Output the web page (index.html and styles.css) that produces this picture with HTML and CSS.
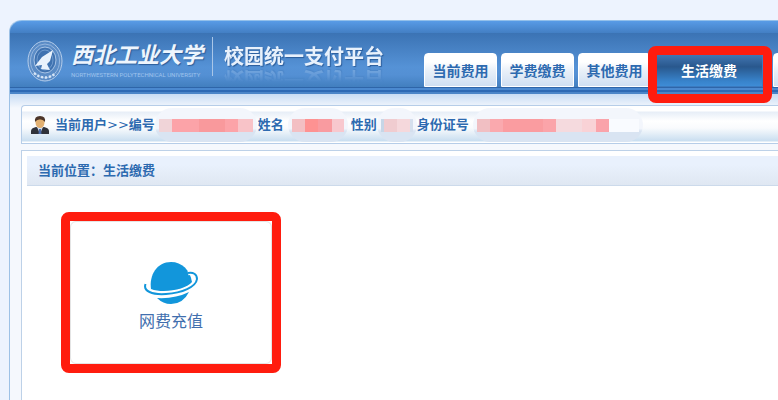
FILE: index.html
```html
<!DOCTYPE html>
<html lang="zh-CN">
<head>
  <meta charset="UTF-8" />
  <meta name="viewport" content="width=device-width, initial-scale=1.0" />
  <title>校园统一支付平台</title>
  <link rel="stylesheet" href="styles.css">
</head>
<body>
  <div class="wrapper">
    <header class="header">
      <svg class="badge" viewBox="0 0 36 42" aria-hidden="true">
        <ellipse cx="18" cy="21" rx="17" ry="20" fill="#5b8cc6" stroke="#b4cdeb" />
        <ellipse cx="18" cy="21" rx="14.5" ry="17" fill="none" stroke="#a4c2e5" stroke-width=".8" />
        <ellipse cx="18" cy="20" rx="11" ry="13" fill="#3f72b0" stroke="#a9c5e7" stroke-width="1" />
        <ellipse cx="18" cy="20" rx="8" ry="10" fill="none" stroke="#7ca6d7" stroke-width=".8" />
        <path d="M26 10 L15 17 L8 26 L15 25 L14 29 L23 30 L20 24 L23 21 Z" fill="#e9f2fc" />
        <path d="M7 33 Q18 42 29 33" fill="none" stroke="#d7e6f7" stroke-width="2.4" stroke-dasharray="2.2 1.8" />
      </svg>
      <div class="school">
        <div class="school-name">西北工业大学</div>
        <div class="school-en">NORTHWESTERN POLYTECHNICAL UNIVERSITY</div>
      </div>
      <h1>校园统一支付平台</h1>
      <nav class="tabs">
        <a href="#">当前费用</a>
        <a href="#">学费缴费</a>
        <a href="#">其他费用</a>
        <a href="#" class="active marked">生活缴费</a>
        <a href="#" aria-label="更多"></a>
      </nav>
    </header>

    <main>
      <div class="user-bar">
        <svg class="user-icon" viewBox="0 0 18 18" aria-hidden="true">
          <path d="M0 18 V15 Q0 12 5 11 L9 12 L13 11 Q18 12 18 15 V18 Z" fill="#30323a" />
          <path d="M6 11 L9 18 L12 11 Z" fill="#d5e2f4" />
          <path d="M8 13 H10 L10.5 18 H7.5 Z" fill="#4c6ca8" />
          <ellipse cx="9" cy="6.5" rx="4.5" ry="5.5" fill="#e3b172" />
          <path d="M4 6 Q3 0 9 0 Q15 0 14 6 Q12 3 9 3.500 Q6 3 4 6 Z" fill="#4b3429" />
        </svg>
        <span class="field">当前用户<span class="arrows">&gt;&gt;</span>编号</span>
        <span class="mask mask-id"></span>
        <span class="field">姓名</span>
        <span class="mask mask-name"></span>
        <span class="field">性别</span>
        <span class="mask mask-sex"></span>
        <span class="field">身份证号</span>
        <span class="mask mask-card"></span>
      </div>

      <section class="panel">
        <h2>当前位置：生活缴费</h2>
        <a href="#" class="service marked">
          <svg class="planet" viewBox="0 0 54 42" aria-hidden="true">
            <path d="M7 27 C5 13 13 0 27 0 C38 0 46 8 48 20 C43 27 20 32 7 27 Z" fill="#1296db" />
            <path d="M13 36 Q31 37 45 30 Q39 42 27 42 Q19 42 13 36 Z" fill="#1296db" />
            <path d="M1.500 22 C-1 29 8 33 22 32 C38 31 52 25 53 17 C53 12 49 10 44 11" fill="none" stroke="#fff" stroke-width="4.500" />
            <path d="M1.500 22 C-1 29 8 33 22 32 C38 31 52 25 53 17 C53 12 49 10 44 11" fill="none" stroke="#1296db" stroke-width="2" />
          </svg>
          <span>网费充值</span>
        </a>
      </section>
    </main>
  </div>
</body>
</html>
```

FILE: styles.css
```css
* {
  box-sizing: border-box;
}
body {
  margin: 0;
  padding: 20px 0 0 9px;
  min-height: 100vh;
  display: flex;
  background: #edf3fe;
  color: #2d6ab0;
  font-family: "Liberation Sans", "Noto Sans CJK SC", sans-serif;
  font-size: 13px;
}
a {
  color: inherit;
  text-decoration: none;
}
.wrapper {
  display: flex;
  flex: 1;
  flex-direction: column;
  min-width: 0;
  border-left: 1px solid #9dc1e6;
  border-top-left-radius: 12px;
  background: #f5f8fd;
  overflow-x: clip;
}

/* header */
.header {
  display: flex;
  height: 74px;
  padding-left: 17px;
  border-top: 1px solid #93c0ea;
  border-top-left-radius: 12px;
  background:
    linear-gradient(#2e65a9 0 1px, #4b89d0 1px 3px, #2d69b4 3px 5px, #4b85c8 5px) bottom / 100% 7px no-repeat,
    linear-gradient(#589be6, #437fc4) top / 100% 12px no-repeat,
    linear-gradient(#3b73b4 12px, #5592d6 46px, #5490d4 54px, #407dbd 67px);
}
.badge {
  flex: none;
  width: 36px;
  height: 42px;
  margin-top: 19px;
}
.school {
  flex: none;
  width: 150px;
  margin-top: 16px;
  padding: 4px 0 0 8px;
  height: 39px;
  border-right: 1px solid #a9c6e8;
  color: #eef5fd;
  white-space: nowrap;
}
.school-name {
  font-size: 22px;
  line-height: 30px;
  font-style: italic;
  font-weight: bold;
  text-shadow: 1px 1px 1px #2b5d9b;
}
.school-en {
  font-family: Roboto, sans-serif;
  font-size: 6px;
  line-height: 8px;
  color: #9fc3ec;
}
h1 {
  flex: none;
  margin: 21px 0 0 11px;
  width: 200px;
  height: 30px;
  font-size: 20px;
  line-height: 30px;
  white-space: nowrap;
  color: #e8f1fc;
  text-shadow: 1px 1px 1px #2b5d9b;
  -webkit-box-reflect: below -8px linear-gradient(transparent 40%, rgba(0, 0, 0, .3));
}
.tabs {
  display: flex;
  flex: 1;
  min-width: 0;
  gap: 4px;
  height: 34px;
  margin-top: 32px;
}
.tabs a {
  flex: none;
  width: 73px;
  border: 1px solid #fff;
  border-radius: 4px 4px 0 0;
  background: linear-gradient(#fff 25%, #eaf1f9 50%, #cfdff2);
  font-size: 14px;
  font-weight: bold;
  line-height: 34px;
  text-align: center;
}
.tabs .active {
  width: 108px;
  margin-right: 6px;
  border-color: #3b7abf;
  background: linear-gradient(#4478b4, #29588d 40%, #3883cb 85%, #3e8cd6);
  color: #fff;
}

/* red highlight frame */
.marked {
  position: relative;
}
.marked::after {
  content: "";
  position: absolute;
  inset: -10px;
  border: 9px solid #ff1c0e;
  border-radius: 8px;
}
.tabs .marked::after {
  inset: -8px -10px -17px -8px;
}

main {
  display: flex;
  flex: 1;
  flex-direction: column;
  padding: 11px 0 0 11px;
  background: linear-gradient(#c8dcf4, #f5f8fd 14px);
}

/* current user */
.user-bar {
  display: flex;
  align-items: center;
  height: 39px;
  padding-left: 9px;
  border: 1px solid #b6cde8;
  border-right: 0;
  border-top-left-radius: 4px;
  background: linear-gradient(#fff 5px, #e7eef7 6px, #fff 15px, #f9fbfd 22px, #c9def0 35px, #fff 36px);
  white-space: nowrap;
}
.user-icon {
  width: 18px;
  height: 18px;
  margin-right: 6px;
}
.field {
  line-height: 20px;
  font-weight: bold;
}
.arrows {
  font-family: "DejaVu Sans", sans-serif;
  font-size: 13px;
  font-weight: normal;
}
.mask {
  height: 34px;
  border-radius: 17px;
  background: linear-gradient(#f3f6fc 60%, #d9e4f2 68%);
}
.mask::before {
  content: "";
  display: block;
  height: 13px;
  margin: 11px 4px 0;
}
.mask-id {
  width: 102px;
  margin-right: 1px;
}
.mask-id::before {
  background: linear-gradient(90deg, #f0d4d8 13px, #fca3a8 13px 40px, #f9999c 40px 66px, #fca3a8 66px 79px, #f8c3c8 79px);
}
.mask-name {
  width: 60px;
  margin: 0 3px 0 4px;
}
.mask-name::before {
  background: linear-gradient(90deg, #f3bfc3 13px, #fe9292 13px 26px, #f99ba0 26px 40px, #f8c8ce 40px);
}
.mask-sex {
  width: 40px;
}
.mask-sex::before {
  background: linear-gradient(90deg, #c6d6e7 3px, #f0ccd0 3px 16px, #f5d8dc 16px 29px, #d5dfed 29px);
}
.mask-card {
  width: 170px;
  margin-left: 4px;
}
.mask-card::before {
  background: linear-gradient(90deg, #f1bfc3 13px, #faa9ae 13px 26px, #fa9ca0 26px 66px, #fba4a9 66px 79px, #f5dade 79px 105px, #f9d2d6 105px 119px, #faa3aa 119px 132px, #f9fbff 132px);
}

/* content */
.panel {
  flex: 1;
  margin-top: 6px;
  padding: 5px 0 0 5px;
  border: 1px solid #bdd1e8;
  border-width: 1px 0 0 1px;
  background: #fff;
}
h2 {
  margin: 0;
  padding-left: 11px;
  height: 30px;
  border-bottom: 1px solid #ccdaeb;
  background: linear-gradient(#e9f1fd 30%, #dfe7f2);
  font-size: 13px;
  line-height: 30px;
}
.service {
  display: flex;
  flex-direction: column;
  align-items: center;
  width: 202px;
  height: 143px;
  margin: 35px 0 0 43px;
  padding-top: 40px;
  border: 1px solid #e4e4e4;
  border-radius: 6px;
  color: #416fae;
  font-size: 16px;
  line-height: 20px;
}
.planet {
  width: 54px;
  height: 42px;
  margin-bottom: 8px;
}
```
